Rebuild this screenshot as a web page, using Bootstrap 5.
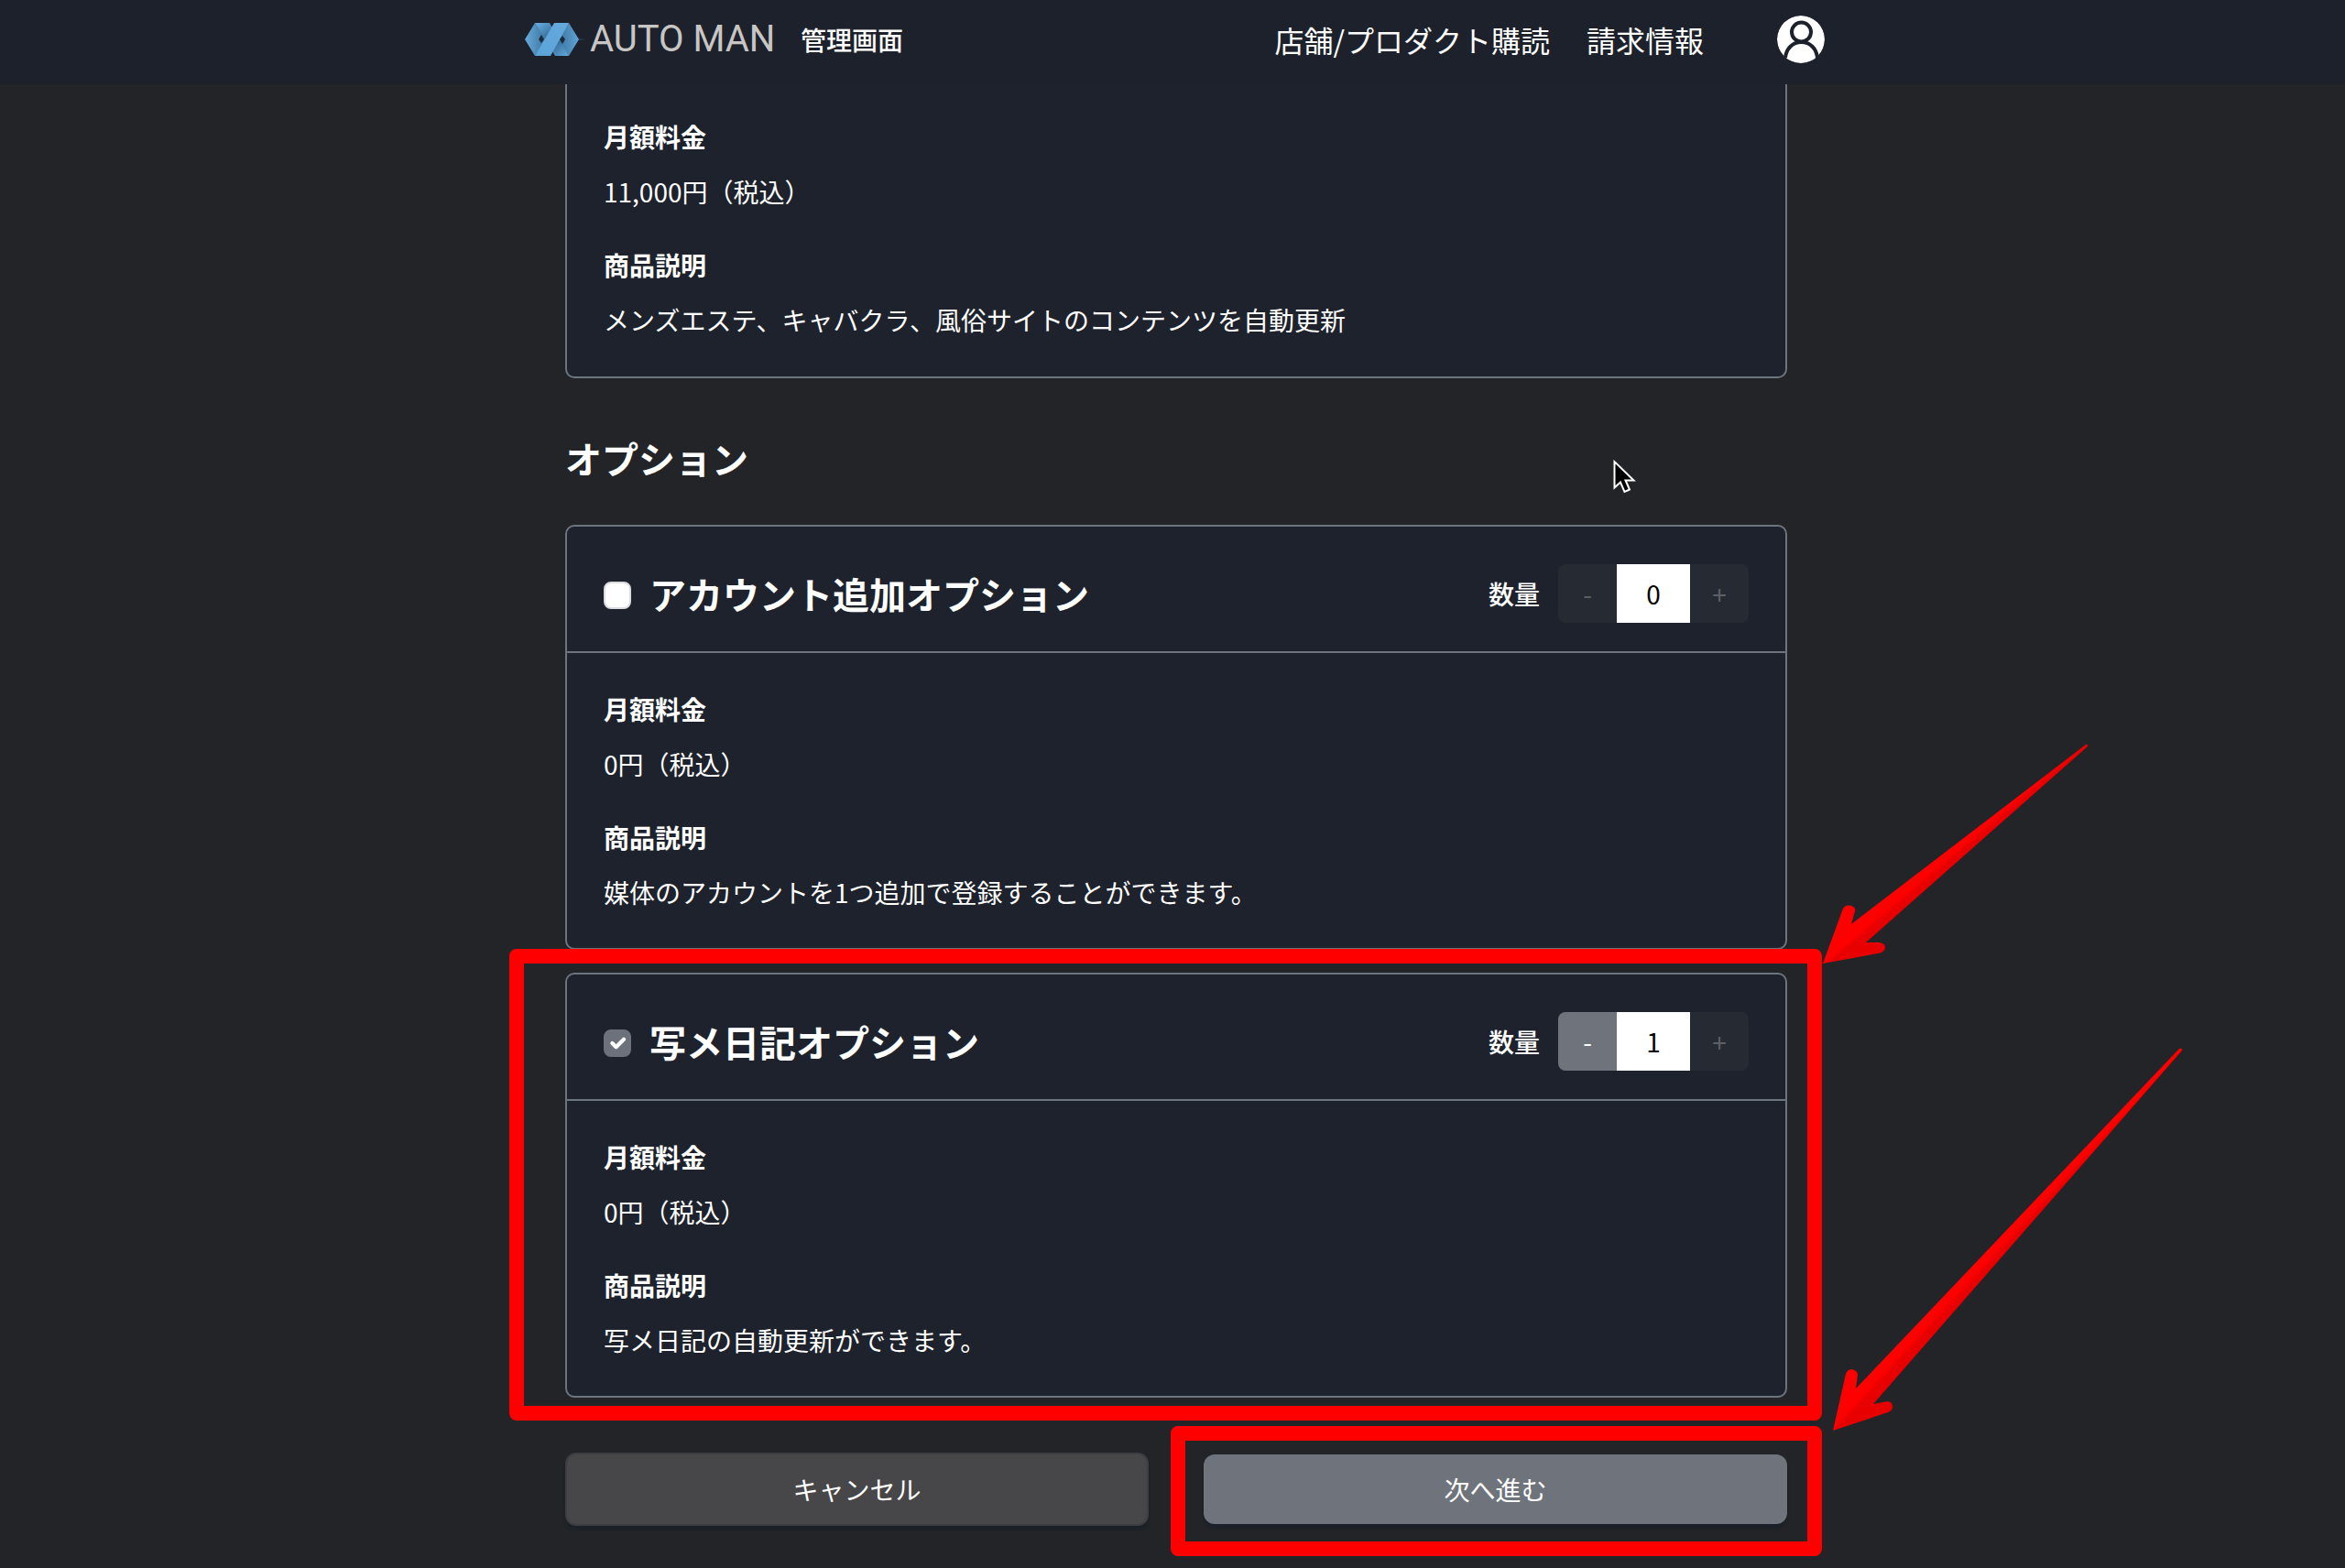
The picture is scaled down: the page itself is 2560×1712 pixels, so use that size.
<!DOCTYPE html>
<html lang="ja">
<head>
<meta charset="utf-8">
<meta name="viewport" content="width=device-width, initial-scale=1">
<title>AUTO MAN 管理画面</title>
<link rel="stylesheet" href="https://cdn.jsdelivr.net/npm/bootstrap@5.3.0/dist/css/bootstrap.min.css">
<style>
  body { background: #222427; color: #fff; font-family: "Noto Sans CJK JP", sans-serif; font-size: 28px; line-height: 42px; }
  .topbar { background: #1d212b; min-height: 92px; padding: 17px 0 20px; z-index: 1020; }
  .topbar-inner { max-width: 1424px; }
  .topbar a { color: #fff; text-decoration: none; }
  .logo-mark { width: 76px; height: 36px; }
  .logo-word { width: 206px; color: #c8c6c5; font-family: Roboto, "Liberation Sans", sans-serif; font-weight: 400; font-size: 40px; line-height: 48px; white-space: nowrap; }
  .topnav { gap: 40px; font-size: 32px; line-height: 48px; }
  .avatar { width: 52px; height: 52px; margin-left: 40px; }
  .page { max-width: 1342px; padding-left: 8px; }
  .panel { --bs-card-bg: #1d222c; --bs-card-color: #fff; --bs-card-border-width: 2px; --bs-card-border-color: #6c757d; --bs-card-border-radius: 10px; --bs-card-inner-border-radius: 8px; }
  .panel .card-header { background: none; border-bottom: 2px solid #6c757d; padding: 41px 40px 31px; }
  .panel .card-body { padding: 40px; }
  .panel-cut { border-top: 0; border-top-left-radius: 0; border-top-right-radius: 0; }
  .panel.panel-cut .card-body { padding-top: 36px; padding-bottom: 41px; }
  .facts dt { margin-bottom: 18px; }
  .facts dd { margin-bottom: 38px; }
  .facts dd:last-child { margin-bottom: 0; }
  .section-title { font-size: 40px; line-height: 60px; font-weight: 700; margin: 0; padding: 57px 0 43px; }
  .option-list { gap: 25px; }
  .option-name { gap: 20px; font-size: 40px; line-height: 60px; font-weight: 700; }
  .option-name .form-check-input { width: 30px; height: 30px; margin: 4px 0 0; border: 2px solid #dcdcde; border-radius: 8px; background-color: #fff; }
  .option-name .form-check-input:checked { background-color: #6c717b; border-color: #6c717b; background-size: 28px; }
  .qty { gap: 20px; }
  .stepper { width: 208px; height: 64px; }
  .stepper .btn { width: 64px; padding: 0; border: 0; border-radius: 8px; background: #6f747c; color: #fff; font-size: 28px; line-height: 42px; }
  .stepper .btn:disabled { background: #262a33; color: #5c5f65; opacity: 1; }
  .stepper .form-control { padding: 0; border: 0; background: #fff; color: #000; font-size: 28px; text-align: center; }
  .actions { gap: 60px; margin-top: 60px; padding-bottom: 46px; }
  .action-btn { font-size: 28px; line-height: 42px; border-radius: 12px; color: #fff; box-shadow: 0 4px 3px #1b2129; }
  .btn-cancel { padding: 17px; background: #474749; border: 2px solid #3c3e41; }
  .btn-next { padding: 17px; background: #6f747c; border: 0; }
  /* annotations laid over the page */
  .marker { border: 16px solid #f00; border-radius: 8px; pointer-events: none; z-index: 5; }
  .marker-option { inset: -26px -38px -25px -61px; }
  .marker-next { inset: -31px -38px -35px -36px; }
  .arrow { z-index: 6; pointer-events: none; }
  .arrow-option { left: calc(100% + 39px); bottom: calc(100% + 9px); }
  .arrow-next { left: calc(100% + 50px); bottom: calc(100% + 25px); }
  .pointer { right: 162px; top: 88px; }
</style>
<script src="https://cdn.jsdelivr.net/npm/bootstrap@5.3.0/dist/js/bootstrap.bundle.min.js"></script>
</head>
<body>
<header class="topbar sticky-top">
  <div class="topbar-inner mx-auto d-flex align-items-center justify-content-between">
    <a href="#" class="d-flex align-items-center">
      <svg class="logo-mark flex-shrink-0" viewBox="0 0 76 36" aria-hidden="true">
        <defs>
          <linearGradient id="lgBand" x1="0" y1="1" x2="1" y2="0"><stop offset="0" stop-color="#5ba3d8"/><stop offset="1" stop-color="#66a9dc"/></linearGradient>
          <linearGradient id="lgDown" gradientUnits="userSpaceOnUse" x1="22" y1="0" x2="50" y2="36"><stop offset="0" stop-color="#62a6da"/><stop offset=".35" stop-color="#3a739f"/><stop offset=".65" stop-color="#3a739f"/><stop offset="1" stop-color="#62a6da"/></linearGradient>
          <linearGradient id="lgLeft" x1="0" y1="0" x2="1" y2="0"><stop offset="0" stop-color="#67abdc"/><stop offset="1" stop-color="#3a739f"/></linearGradient>
          <linearGradient id="lgRight" x1="0" y1="0" x2="1" y2="0"><stop offset="0" stop-color="#3a739f"/><stop offset="1" stop-color="#5fa3d4"/></linearGradient>
          <linearGradient id="lgGlow"><stop offset="0" stop-color="#3c7093" stop-opacity="0"/><stop offset=".15" stop-color="#3c7093"/><stop offset=".85" stop-color="#3c7093"/><stop offset="1" stop-color="#3c7093" stop-opacity="0"/></linearGradient>
        </defs>
        <path d="M0 18 38 17 76 18 38 19Z" fill="url(#lgGlow)"/>
        <path d="M5 18 16 0 28 18 16 36Z" fill="url(#lgLeft)"/>
        <path d="M64 18 53 0 41 18 53 36Z" fill="url(#lgRight)"/>
        <path d="M16 0H32L53 36H38Z" fill="url(#lgDown)"/>
        <path d="M37 0H53L33 36H16Z" fill="url(#lgBand)"/>
        <path d="M23 13 26 18 23 22 20 18ZM46 14 49 18 46 23 43 18Z" fill="#1d2a3a"/>
      </svg>
      <span class="logo-word">AUTO MAN</span>
      <span class="fw-medium ms-4">管理画面</span>
    </a>
    <nav class="topnav d-flex align-items-center">
      <a href="#">店舗/プロダクト購読</a>
      <a href="#">請求情報</a>
      <a href="#" class="avatar d-flex" aria-label="アカウント">
        <svg width="52" height="52" viewBox="0 0 52 52" aria-hidden="true">
          <clipPath id="face"><circle cx="26" cy="26" r="26"/></clipPath>
          <g clip-path="url(#face)">
            <circle cx="26" cy="26" r="26" fill="#fff"/>
            <circle cx="26.500" cy="18" r="10.500" fill="none" stroke="#1d212b" stroke-width="4"/>
            <path d="M9 46C10 36 17 29 26.500 29S43 36 44 46" fill="none" stroke="#1d212b" stroke-width="4"/>
          </g>
        </svg>
      </a>
    </nav>
  </div>
</header>

<main class="page mx-auto">
  <section class="card panel panel-cut">
    <div class="card-body">
      <dl class="facts mb-0">
        <dt>月額料金</dt><dd>11,000円（税込）</dd>
        <dt>商品説明</dt><dd>メンズエステ、キャバクラ、風俗サイトのコンテンツを自動更新</dd>
      </dl>
    </div>
  </section>

  <div class="position-relative">
    <h2 class="section-title">オプション</h2>
    <svg class="pointer position-absolute" width="28" height="42" viewBox="0 0 28 42" aria-hidden="true">
      <path d="M1.500 3V31.500L8 25.500 12.500 36 18 33.500 13.500 23.500H22.500Z" fill="#000" stroke="#fff" stroke-width="2"/>
    </svg>
  </div>

  <div class="option-list d-flex flex-column">
    <section class="card panel">
      <div class="card-header d-flex align-items-center justify-content-between">
        <div class="option-name d-flex align-items-center">
          <input class="form-check-input" type="checkbox" id="optAccount">
          <label for="optAccount">アカウント追加オプション</label>
        </div>
        <div class="qty d-flex align-items-center">
          <label class="fw-medium" for="qtyAccount">数量</label>
          <div class="stepper input-group flex-nowrap">
            <button class="btn" type="button" disabled>-</button>
            <input class="form-control" type="text" inputmode="numeric" id="qtyAccount" value="0">
            <button class="btn" type="button" disabled>+</button>
          </div>
        </div>
      </div>
      <div class="card-body">
        <dl class="facts mb-0">
          <dt>月額料金</dt><dd>0円（税込）</dd>
          <dt>商品説明</dt><dd>媒体のアカウントを1つ追加で登録することができます。</dd>
        </dl>
      </div>
    </section>

    <div class="position-relative">
      <section class="card panel">
        <div class="card-header d-flex align-items-center justify-content-between">
          <div class="option-name d-flex align-items-center">
            <input class="form-check-input" type="checkbox" id="optDiary" checked>
            <label for="optDiary">写メ日記オプション</label>
          </div>
          <div class="qty d-flex align-items-center">
            <label class="fw-medium" for="qtyDiary">数量</label>
            <div class="stepper input-group flex-nowrap">
              <button class="btn" type="button">-</button>
              <input class="form-control" type="text" inputmode="numeric" id="qtyDiary" value="1">
              <button class="btn" type="button" disabled>+</button>
            </div>
          </div>
        </div>
        <div class="card-body">
          <dl class="facts mb-0">
            <dt>月額料金</dt><dd>0円（税込）</dd>
            <dt>商品説明</dt><dd>写メ日記の自動更新ができます。</dd>
          </dl>
        </div>
      </section>
      <div class="marker marker-option position-absolute"></div>
      <svg class="arrow arrow-option position-absolute" width="292" height="242" viewBox="0 0 292 242" aria-hidden="true">
        <defs><linearGradient id="redA" gradientUnits="userSpaceOnUse" x1="130" y1="110" x2="152" y2="136"><stop offset=".45" stop-color="#f00"/><stop offset=".6" stop-color="#e80000"/></linearGradient></defs>
        <path d="M0 241 22 181Q25 176 31 178 36 180 35 184L31 198 287 2Q290 1 289 4L47 218H62Q68 219 68 224 67 229 60 230Z" fill="url(#redA)"/>
      </svg>
    </div>
  </div>

  <div class="actions d-flex align-items-center">
    <div class="w-100">
      <button class="btn action-btn btn-cancel w-100 d-block" type="button">キャンセル</button>
    </div>
    <div class="position-relative w-100">
      <button class="btn action-btn btn-next w-100 d-block" type="button">次へ進む</button>
      <div class="marker marker-next position-absolute"></div>
      <svg class="arrow arrow-next position-absolute" width="384" height="420" viewBox="0 0 384 420" aria-hidden="true">
        <defs><linearGradient id="redB" gradientUnits="userSpaceOnUse" x1="180" y1="196" x2="206" y2="220"><stop offset=".45" stop-color="#f00"/><stop offset=".6" stop-color="#e80000"/></linearGradient></defs>
        <path d="M0 419 14 357Q16 352 21 352 27 354 27 358L25 373 378 2Q382 1 381 4L44 390 60 387Q65 388 65 393 65 397 60 399Z" fill="url(#redB)"/>
      </svg>
    </div>
  </div>
</main>
</body>
</html>
